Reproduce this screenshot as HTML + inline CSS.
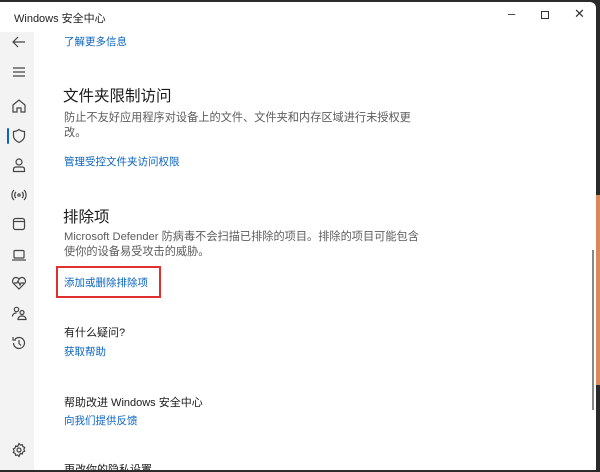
<!DOCTYPE html>
<html><head><meta charset="utf-8"><style>
*{margin:0;padding:0;box-sizing:border-box}
body{width:600px;height:472px;background:#2a2a2a;overflow:hidden;position:relative;font-family:"Liberation Sans","Noto Sans CJK SC",sans-serif}
.win{position:absolute;left:0;top:2px;width:596px;height:468px;background:#fff;border-radius:0 6px 0 0;overflow:hidden}
.side{position:absolute;left:0;top:30px;width:34px;height:440px;background:#f3f3f3}
.t{position:absolute;white-space:nowrap}
.link{color:#0a64c0;font-size:10.5px}
.h{color:#1a1a1a;font-size:15.5px}
.d{color:#5c5c5c;font-size:11.2px;line-height:15px}
.s{color:#1a1a1a;font-size:11px}
svg.i{position:absolute;left:11px}
</style></head><body>
<div style="position:absolute;right:0;top:195px;width:4px;height:190px;background:#d9895a"></div>
<div class="win">
<div class="t" style="left:14px;top:8px;font-size:11px;color:#222">Windows 安全中心</div>
<div class="t" style="left:508px;top:4px;font-size:13px;color:#333">–</div>
<div style="position:absolute;left:541px;top:9px;width:8px;height:8px;border:1px solid #333"></div>
<div class="t" style="left:574px;top:4px;font-size:13px;color:#333">✕</div>
<div class="side"></div>
<svg class="i" style="top:32px" width="16" height="16" fill="none" stroke="#444" stroke-width="1.2"><path d="M14 8H2M7 3L2 8l5 5"/></svg>
<svg class="i" style="top:62px" width="16" height="16" fill="none" stroke="#444" stroke-width="1.2"><path d="M2 4h12M2 8h12M2 12h12"/></svg>
<svg class="i" style="top:96px" width="16" height="16" fill="none" stroke="#444" stroke-width="1.2"><path d="M2 7l6-5 6 5v7H10v-4H6v4H2z"/></svg>
<div style="position:absolute;left:7px;top:126px;width:2px;height:16px;background:#0a64c0;border-radius:1px"></div>
<svg class="i" style="top:126px" width="16" height="16" fill="none" stroke="#444" stroke-width="1.2"><path d="M8 1.5C6 3 4 3.5 2.5 3.5V8c0 3 2.5 5 5.5 6.5 3-1.5 5.5-3.5 5.5-6.5V3.5C12 3.5 10 3 8 1.5z"/></svg>
<svg class="i" style="top:155px" width="16" height="16" fill="none" stroke="#444" stroke-width="1.2"><circle cx="8" cy="5" r="3"/><path d="M2.5 14.5v-2c0-1.5 1-2.5 2.5-2.5h6c1.5 0 2.5 1 2.5 2.5v2z"/></svg>
<svg class="i" style="top:185px" width="16" height="16" fill="none" stroke="#444" stroke-width="1.2"><circle cx="8" cy="8" r="1.2"/><path d="M5 5a4 4 0 0 0 0 6M11 5a4 4 0 0 1 0 6M3 3a7 7 0 0 0 0 10M13 3a7 7 0 0 1 0 10"/></svg>
<svg class="i" style="top:214px" width="16" height="16" fill="none" stroke="#444" stroke-width="1.2"><rect x="2.5" y="2.5" width="11" height="11" rx="2"/><path d="M2.5 5.5h11"/></svg>
<svg class="i" style="top:245px" width="16" height="16" fill="none" stroke="#444" stroke-width="1.2"><rect x="3" y="3.5" width="10" height="7.5" rx="1"/><path d="M1 13h14"/></svg>
<svg class="i" style="top:273px" width="16" height="16" fill="none" stroke="#444" stroke-width="1.2"><path d="M8 14L2.5 8.5C0.5 6.5 2 2.5 5 2.5c1.5 0 2.5 1 3 2 .5-1 1.5-2 3-2 3 0 4.5 4 2.5 6z"/><path d="M3 8h3l1-2 2 4 1-2h3"/></svg>
<svg class="i" style="top:303px" width="16" height="16" fill="none" stroke="#444" stroke-width="1.2"><circle cx="5.5" cy="4.5" r="2.2"/><circle cx="11" cy="7.5" r="2"/><path d="M1.5 11.5c0-2 1.5-3.5 4-3.5M7 14.5c0-2 1.5-3.5 4-3.5s4 1.5 4 3.5z"/></svg>
<svg class="i" style="top:333px" width="16" height="16" fill="none" stroke="#444" stroke-width="1.2"><path d="M2.5 8a5.5 5.5 0 1 0 1.6-3.9M2 2v3h3M8 5v3.5l2 2"/></svg>
<svg class="i" style="top:440px" width="16" height="16" fill="none" stroke="#444" stroke-width="1.2"><circle cx="8" cy="8" r="2"/><path d="M8 1.5l1.3 1.6 2-.5.5 2 1.9.8-.8 1.9.8 1.9-1.9.8-.5 2-2-.5L8 14.5l-1.3-1.6-2 .5-.5-2-1.9-.8.8-1.9-.8-1.9 1.9-.8.5-2 2 .5z"/></svg>

<div class="t link" style="left:64px;top:32px">了解更多信息</div>
<div class="t h" style="left:63px;top:82px">文件夹限制访问</div>
<div class="t d" style="left:64px;top:109px">防止不友好应用程序对设备上的文件、文件夹和内存区域进行未授权更<br>改。</div>
<div class="t link" style="left:64px;top:152px">管理受控文件夹访问权限</div>
<div class="t h" style="left:63px;top:203px">排除项</div>
<div class="t d" style="left:64px;top:228px">Microsoft Defender 防病毒不会扫描已排除的项目。排除的项目可能包含<br>使你的设备易受攻击的威胁。</div>
<div style="position:absolute;left:56px;top:264px;width:105px;height:32px;border:2px solid #e03030"></div>
<div class="t link" style="left:64px;top:273px">添加或删除排除项</div>
<div class="t s" style="left:64px;top:322px">有什么疑问?</div>
<div class="t link" style="left:64px;top:342px">获取帮助</div>
<div class="t s" style="left:64px;top:392px">帮助改进 Windows 安全中心</div>
<div class="t link" style="left:64px;top:411px">向我们提供反馈</div>
<div class="t s" style="left:64px;top:459px">更改你的隐私设置</div>
<div style="position:absolute;left:592px;top:248px;width:1.5px;height:160px;background:#888"></div>
</div>
</body></html>
